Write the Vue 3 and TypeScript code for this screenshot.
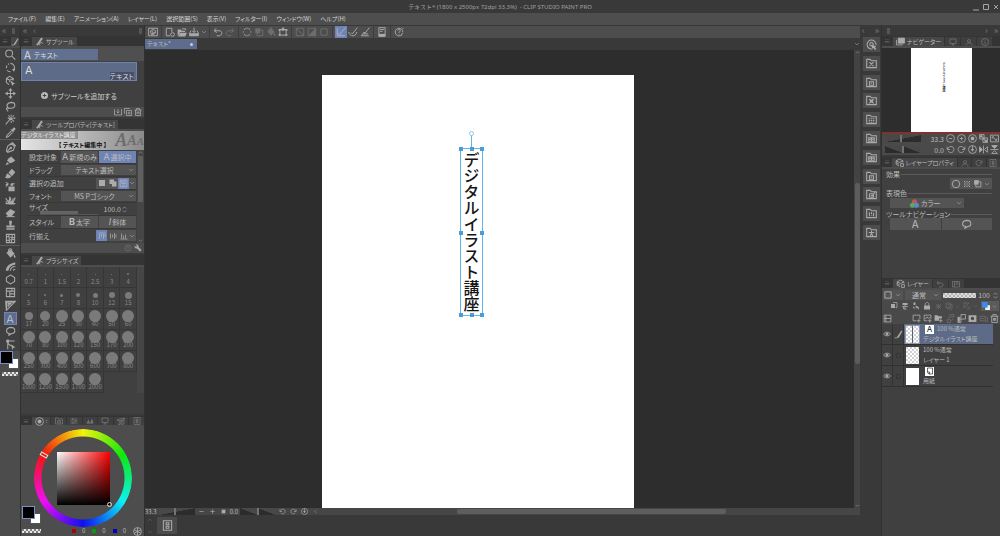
<script setup lang="ts">
import { h, ref } from 'vue'

type Shape = [d: string, filled?: boolean]

const icons: Record<string, Shape[]> = {
  zoom: [['M11 6.5a5 5 0 1 1-10 0a5 5 0 0 1 10 0M10 10.500l5 5']],
  rotate: [['M8 2a6 6 0 0 1 5 9M8 14a6 6 0 0 1-5-2M2 9a6 6 0 0 1 1-4M4.500 3.500l1.500-1'], ['M10 10h5l-2 4z', true]],
  object: [['M2 5l5-3l5 3v3M2 5v6l4 3M2 5l5 2.500l5-2.500M7 7.500v3'], ['M8 8l7 5l-3 .5l-1.500 2.500z', true]],
  move: [['M8 2v12M2 8h12'], ['M8 0l3 4h-6zM8 16l3-4h-6zM0 8l4-3v6zM16 8l-4-3v6z', true]],
  lasso: [['M6 11c-5-2-4-8 3-9c7 0 7 8 0 8.500c-3 .5-6-2-7 1c0 2 3 1 2 4']],
  wand: [['M7 8l-6 7M9 1v3M9 10v3M4 6h2M12 6h3M5 2l2 2M13 2l-2 2M13 11l-2-2'], ['M6 5h5v4h-5z', true]],
  dropper: [['M9 6L3 12l-1 3l3-1l6-6'], ['M8 4l1-1l1 1l2-3c2-1 4 1 3 3l-3 2l1 1l-1 1z', true]],
  pen: [['M9 2l5 5l-2 5l-8 3l-2-2l2-7zM3 14l5-5'], ['M9 1l2-1l5 5l-1 2zM7 7h3v3h-3z', true]],
  pencil: [['M1 15l2-5l3 3zM9 2l6 6l-4 3l-4 1l-4-4l2-3z', true], ['M9 5l3 3']],
  brush: [['M4 8c-3 1-2 5-4 6c4 2 8 1 9-2zM5 7l5 5l5-6l-5-5z', true], ['M10 4l2 2']],
  airbrush: [['M5 8h9v7h-9zM8 4h4v3h-4z', true], ['M1 2l4 2M1 5h4M1 8l3-2M9 4h5']],
  deco: [['M1 6l5 8l1-10l3 10l2-8M3 14l-2-3M15 5l-4 9M1 14h14'], ['M4 9l3 6h6l-2-5l-2 2l-2-3z', true]],
  eraser: [['M8 3l7 4l-6 7h-4l-4-5z', true], ['M2 14h12']],
  stamp: [['M6 1h4v3l-1 4h5v3h-12v-3h5l-1-4zM2 12h12v2h-12z', true]],
  liquify: [['M2 2h12v12h-12zM2 6c4-3 8 3 12 0M2 10c4 3 8-3 12 0M6 2c-2 4 2 8 0 12M10 2c2 4-2 8 0 12']],
  fill: [['M2 7l6-5l6 6l-6 6zM13 9c2 2 3 4 2 5c-2 1-3-2-2-5z', true], ['M5 5c0-5 5-5 5-1']],
  gradient: [['M1 14c1-7 6-11 14-12v3c-6 1-9 4-10 9z', true], ['M8 14c0-4 3-6 7-6M12 14c0-1 1-2 3-2']],
  hexagon: [['M8 1.500l6 3.500v6l-6 3.500l-6-3.500v-6z']],
  frame: [['M2 2h12v12h-12zM2 6h12M7 6v8M7 10h7M10 2v4']],
  ruler: [['M1 2h14l-13 13zM4.500 5h4l-4 4z'], ['M1 2h14l-2 2h-10v9l-1.500 2z', true]],
  balloon: [['M7 11c-7-1-6-8 1-9c8 0 8 8 2 9l-5 3z']],
  correct: [['M2 3h12M4 1v14M4 5c2 4 4 5 7 5'], ['M2 1h4v4h-4zM9 8l6 4l-3 1l-1 3z', true]],
  spiral: [['M1 2h14v12h-14zM11 8c0 3-6 4-7 0c0-5 8-5 8 0c0 4-6 5-8 3M8 6c-2 0-2 4 1 3']],
  newdoc: [['M8 14h-6v-12h9v6M15 12a3 3 0 1 1-6 0a3 3 0 0 1 6 0']],
  folder: [['M1 4h5l2 2h5v2h-8l-3 6h-1zM5 9h11l-3 6h-11z', true], ['M8 3h6v2']],
  save: [['M8 1v7M5 6l3 3l3-3M3 6l-2 4v4h14v-4l-2-4'], ['M1 10h14v4h-14z', true]],
  down: [['M3 5.500l5 5l5-5']],
  undo: [['M5 2L2 6l4 3M2 6h8c6 0 5 8 0 8h-4']],
  redo: [['M11 2l3 4l-4 3M14 6h-8c-6 0-5 8 0 8h4']],
  dots: [['M8 1v2M8 13v2M1 8h2M13 8h2M3 3l1.500 1.500M11.500 11.500l1.500 1.500M3 13l1.500-1.500M11.500 4.500l1.500-1.500M5 2l1 1.500M11 2l-1 1.500M5 14l1-1.500M11 14l-1-1.500']],
  copy: [['M5 5h9v9h-9z'], ['M2 2h8v8h-8z', true]],
  transform: [['M3 4h10v9h-10zM8 0v4'], ['M1 3h3v3h-3zM12 3h3v3h-3zM1 11h3v3h-3zM12 11h3v3h-3zM6 2h4v4h-4z', true]],
  desel: [['M2 2h12v12h-12zM2 2l12 12']],
  invert: [['M2 2h12v12h-12z'], ['M14 2v12h-12z', true]],
  square: [['M3 3h10v10h-10z']],
  snap1: [['M2 2v12h12M3 9l3 3l9-11']],
  snap2: [['M1 8c2 8 12 8 13 0M5 9l2 2l8-10']],
  snap3: [['M2 14h12M2 14l5-6M6 8l2 2l7-9M5 11h8']],
  page: [['M3 1h10v14h-10z'], ['M3 11h10v4h-10z', true], ['M5 4h6M5 7h4']],
  help: [['M12 13c-5 3-10 0-10-5c0-8 12-8 12 0M6 6c0-3 5-3 4 0l-2 3v1M8 12v1M13 1l2 2M14 9l-3 5']],
  saveSub: [['M2 3h-1v11h14v-11h-1M8 2v8M5 7l3 3l3-3']],
  addSub: [['M5 5h10v10h-10zM2 11h-1v-10h10v1M10 7v6M7 10h6']],
  trash: [['M1 4h14M3 4v11h10v-11M5 4v-3h6v3M6 7v5M8 7v5M10 7v5']],
  plus: [['M8 0a8 8 0 1 1 0 16a8 8 0 0 1 0-16M7 4v3h-3v2h3v3h2v-3h3v-2h-3v-3z', true]],
  wrench: [['M12 15l-6-6c-4 1-6-3-5-6l3 3l2-2l-3-3c5-1 7 2 6 5l6 6z', true]],
  clock: [['M14 8a6 6 0 1 1-12 0a6 6 0 0 1 12 0M8 4v5M6 7l2 2l2-2']],
  solid: [['M2 2h12v12h-12z', true]],
  merge: [['M1 1h9v4h5v10h-9v-5h-5z', true], ['M6 5h4v5h-4z']],
  subtract: [['M2 2h12v12h-12zM5 5h6v3h-6zM5 11h6M2 2l3 3']],
  alignTop: [['M1 2h14M3 4v10M7 4v6M11 4v10M14 4v6']],
  alignMid: [['M3 3v10M7 5v6M11 2v12M14 5v6']],
  alignBot: [['M1 14h14M3 3v10M7 7v6M11 5v8']],
  ring: [['M14 8a6 6 0 1 1-12 0a6 6 0 0 1 12 0']],
  tone: [['M2 2h2v2h-2zM7 2h2v2h-2zM12 2h2v2h-2zM4.500 4.500h2v2h-2zM9.500 4.500h2v2h-2zM2 7h2v2h-2zM7 7h2v2h-2zM12 7h2v2h-2zM4.500 9.500h2v2h-2zM9.500 9.500h2v2h-2zM2 12h2v2h-2zM7 12h2v2h-2zM12 12h2v2h-2z', true]],
  minusC: [['M15 8a7 7 0 1 1-14 0a7 7 0 0 1 14 0M5 8h6']],
  plusC: [['M15 8a7 7 0 1 1-14 0a7 7 0 0 1 14 0M5 8h6M8 5v6']],
  stopC: [['M15 8a7 7 0 1 1-14 0a7 7 0 0 1 14 0'], ['M5 5h6v6h-6z', true]],
  ccw: [['M4 11c2 4 10 3 10-3c0-7-9-7-11-1M2 3v5h5']],
  cw: [['M12 11c-2 4-10 3-10-3c0-7 9-7 11-1M14 3v5h-5']],
  resetC: [['M15 8a7 7 0 1 1-14 0a7 7 0 0 1 14 0M8 1v7'], ['M5 7h6l-3 5z', true]],
  fit: [['M1 1h8v8h-8zM7 7h8v8h-8zM4 4l7 7'], ['M2 2h4v4h-4zM10 10h4v4h-4z', true]],
  expand: [['M1 2h14v12h-14zM4 8v-3h3M12 8v3h-3M5 6l6 5']],
  flipH: [['M8 1v14M6 8l-5-5v10zM10 8l5-5v10z'], ['M6 8l-5-5v10z', true]],
  flipV: [['M1 8h14M8 6l-5-5h10zM8 10l-5 5h10z'], ['M8 6l-5-5h10z', true]],
  search: [['M9 14.500a6.500 6.500 0 1 1 5.500-5.500M10.500 7.500a2.500 2.500 0 1 1-5 0a2.500 2.500 0 0 1 5 0'], ['M8 8l7 3l-2 1l2 3l-2 1l-2-3l-2 1z', true]],
  fX: [['M1 14v-12h5l2 2h7v10zM5 6l6 6M11 6l-6 6']],
  fBox: [['M1 14v-12h5l2 2h7v10zM5 7h6v5h-6zM7 9h2']],
  fStar: [['M1 14v-12h5l2 2h7v10z'], ['M4 5l4 2l4-2l-2 4l2 4l-4-2l-4 2l2-4z', true]],
  fDots: [['M1 14v-12h5l2 2h7v10zM4 7h2M7 7h2M10 7h2M4 9.500h2M7 9.500h2M10 9.500h2M4 12h2M7 12h2M10 12h2']],
  fGrid: [['M1 14v-12h5l2 2h7v10zM4 7h8v5h-8zM8 7v5M4 9h8']],
  fCheck: [['M1 14v-12h5l2 2h7v10zM5 7h5M5 7v5h6v-3M7 9l2 1l4-5']],
  fList: [['M1 14v-12h5l2 2h7v10zM5 6v6M8 6v3M11 7v5M8 11h1']],
  fMan: [['M1 14v-12h5l2 2h7v10zM4 8h8M8 5v4l-2 4M8 9l2 4']],
  layers: [['M2 5l6-3l6 3l-6 3zM2 5v6l5 3M14 5v3M2 8l5 3M10 10h5v5h-5z']],
  image: [['M4 2h11v9h-11zM1 5v9h11'], ['M4 2h11v9h-11z', true]],
  monitor: [['M2 2h12v9h-12zM5 14h6M8 11v3']],
  person: [['M11 6a3 3 0 1 1-6 0a3 3 0 0 1 6 0M2 15c0-7 12-7 12 0']],
  info: [['M15 8a7 7 0 1 1-14 0a7 7 0 0 1 14 0M8 7v5M8 4v1']],
  film: [['M1 3h14v11h-14zM5 3v11M5 8h10M8 5h4']],
  rows: [['M2 2h12v12h-12zM2 8h12M5 2v12']],
  clip: [['M2 4h8v8h-8z', true], ['M6 1h8v10h-3']],
  light: [['M8 6v9M2 9h12M5 9v5h6'], ['M3 2h10v4h-10z', true]],
  draft: [['M7 9l6 2v4M3 9v3h4'], ['M8 7l6 4l-5 2zM3 1h4v5h-4z', true]],
  lock: [['M2 7h12v8h-12z', true], ['M4.500 7v-3c0-4 7-4 7 0v3']],
  ref: [['M2 2l12 12M14 2l-12 12M2 8h12M8 2v12']],
  mask: [['M2 2h9v9h-9zM11 5h3v9h-9v-3M5 5h3v3']],
  noruler: [['M2 2h10l-10 10zM8 9l6 6M14 9l-6 6']],
  newLayer: [['M8 12h-6v-10h12v7M12 9v6M9 12h6']],
  newTone: [['M8 12h-6v-10h12v7M12 9v6M9 12h6M4 9l3-4l2 3l3-2']],
  newFolder: [['M1 12v-10h5l2 2h6v4h-5v4z', true], ['M12 9v6M9 12h6']],
  transfer: [['M7 5h7v-4h-7zM2 10h6v5h-6zM5 8v-3M10 12l3-4']],
  mergeDown: [['M7 1h8v8h-8zM1 9h6v6h-6'], ['M1 5h4v9h-4z', true]],
  maskSolid: [['M1 2h14v12h-14zM11 8a3 3 0 1 0-6 0a3 3 0 0 0 6 0', true]],
  apply: [['M2 4h9v8h-9zM11 6h4v7h-4M4 8h5']],
  eye: [['M1 8c3-5 11-5 14 0c-3 5-11 5-14 0z'], ['M11 8a3 3 0 1 1-6 0a3 3 0 0 1 6 0', true]],
  stroke: [['M1 14h5'], ['M5 13l8-12l2 1l-7 12z', true]],
  tip: [['M9 15a3 3 0 1 1 5-3'], ['M2 14l9-13l3 2l-9 12z', true]],
  wheel: [['M15 8a7 7 0 1 1-14 0a7 7 0 0 1 14 0'], ['M11.500 8a3.500 3.500 0 1 1-7 0a3.500 3.500 0 0 1 7 0', true]],
  sliders: [['M1 4h14M1 8h14M1 12h14M5 2v4M11 6v4M6 10v4']],
  peaks: [['M1 13l4-8l3 8l4-10l3 10z', true]],
  fan: [['M1 5l14-3v3l-14 3zM3 15l4-8l2 1l-3 7zM9 15l2-8h3v7z']],
  globe: [['M15 8a7 7 0 1 1-14 0a7 7 0 0 1 14 0M8 1v14M2 5l12 6M14 5l-12 6']],
  minus: [['M3 8h10']],
  add: [['M3 8h10M8 3v10']],
  spin: [['M4 6l4-4l4 4M4 10l4 4l4-4']],
  tab: [['M2 1h12v14h-12zM6 4h4v3h-4zM6 9h4v3h-4z']],
  sheet: [['M3 2h10v12h-7l-3-3zM3 10h4v4']],
}

const Ic = (p: { n: string; s?: number }) =>
  h(
    'svg',
    { viewBox: '0 0 16 16', width: p.s ?? 9, height: p.s ?? 9, 'aria-hidden': 'true' },
    icons[p.n].map(([d, f]) =>
      h('path', {
        d,
        fill: f ? 'currentColor' : 'none',
        'fill-rule': 'evenodd',
        stroke: f ? 'none' : 'currentColor',
        'stroke-width': 1.5,
      }),
    ),
  )

const menus = ['ファイル(F)', '編集(E)', 'アニメーション(A)', 'レイヤー(L)', '選択範囲(S)', '表示(V)', 'フィルター(I)', 'ウィンドウ(W)', 'ヘルプ(H)']

const toolGroups = [
  ['zoom', 'rotate', 'object', 'move', 'lasso', 'wand', 'dropper'],
  ['pen', 'pencil', 'brush', 'airbrush', 'deco', 'eraser', 'stamp', 'liquify'],
  ['fill', 'gradient', 'hexagon', 'frame', 'ruler', 'text', 'balloon', 'correct'],
]
const tool = ref('text')

const commands: { items: string[]; dim?: boolean }[] = [
  { items: ['spiral'] },
  { items: ['newdoc', 'folder', 'save', 'down'] },
  { items: ['undo', 'redo'] },
  { items: ['dots', 'copy', 'fill', 'transform'] },
  { items: ['desel', 'invert', 'square'], dim: true },
  { items: ['snap1', 'snap2', 'snap3'] },
  { items: ['page'] },
  { items: ['help'] },
]
const dimmed = new Set(['redo', 'copy', 'fill'])

const brushes: [string, number][] = [
  ['0.7', 1], ['1', 1], ['1.5', 1], ['2', 1], ['2.5', 1], ['3', 1], ['4', 2],
  ['5', 2], ['6', 2], ['7', 3], ['8', 4], ['10', 5], ['12', 6], ['15', 7],
  ['17', 8], ['20', 10], ['25', 12], ['30', 12], ['40', 12], ['50', 12], ['60', 12],
  ['70', 12], ['80', 12], ['100', 12], ['120', 12], ['150', 12], ['170', 12], ['200', 12],
  ['250', 12], ['300', 12], ['400', 12], ['500', 12], ['600', 12], ['700', 12], ['800', 12],
  ['1000', 12], ['1200', 12], ['1500', 12], ['1700', 12], ['2000', 12],
]

const materials = ['search', 'fX', 'fBox', 'fStar', 'fDots', 'fGrid', 'fGrid', 'fBox', 'fCheck', 'fList', 'fMan']
const handles = ['nw', 'n', 'ne', 'w', 'e', 'sw', 's', 'se']
const rgb = ['#b00000', '#00a000', '#0000c8']

const layers = [
  { name: 'デジタルイラスト講座', mode: '100 %通常', badge: 'A', thumb: 'split' },
  { name: 'レイヤー 1', mode: '100 %通常', badge: '', thumb: 'check' },
  { name: '用紙', mode: '', badge: 'paper', thumb: 'white' },
]
const activeLayer = ref(0)
const size = ref('100.0')
</script>

<template>
  <div class="app">
    <header class="title">
      <h1>テキスト* (1800 x 2500px 72dpi 33.3%)&nbsp; - CLIP STUDIO PAINT PRO</h1>
      <div class="win">
        <button aria-label="最小化"><svg viewBox="0 0 8 8" width="8" height="8"><path d="M1 7h6" /></svg></button>
        <button aria-label="最大化"><svg viewBox="0 0 8 8" width="8" height="8"><path d="M1.500 1.500h5v5h-5z" /></svg></button>
        <button aria-label="閉じる"><svg viewBox="0 0 8 8" width="8" height="8"><path d="M2 2l4 4M6 2l-4 4" /></svg></button>
      </div>
    </header>
    <nav class="menu">
      <button v-for="m in menus" :key="m">{{ m }}</button>
    </nav>

    <div class="work">
      <aside class="tools">
        <div class="head"><span>«</span><i class="bar"></i></div>
        <div class="tabs"><span class="grip">≡</span><span class="tab only"><Ic n="stroke" :s="8" /></span></div>
        <div v-for="(g, i) in toolGroups" :key="i" class="group">
          <button v-for="t in g" :key="t" :class="{ on: tool === t }" :aria-label="t" @click="tool = t">
            <b v-if="t === 'text'">A</b>
            <Ic v-else :n="t" :s="11" />
          </button>
        </div>
        <div class="swatches">
          <span class="chips"><i class="fg"></i><i class="bg"></i></span>
          <i class="checker"></i>
        </div>
      </aside>

      <aside class="left">
        <div class="head"><span>«</span><span>‹</span><i class="bar end"></i></div>

        <section>
          <div class="tabs"><span class="grip">≡</span><span class="tab"><Ic n="tip" />サブツール</span></div>
          <div class="subgroup"><button><b>A</b>テキスト</button></div>
          <div class="sublist">
            <button class="subitem"><b>A</b><span>テキスト</span></button>
            <button class="addsub"><Ic n="plus" :s="7" />サブツールを追加する</button>
          </div>
          <div class="foot">
            <button aria-label="登録"><Ic n="saveSub" :s="8" /></button>
            <button aria-label="複製"><Ic n="addSub" :s="8" /></button>
            <button aria-label="削除"><Ic n="trash" :s="8" /></button>
          </div>
        </section>

        <section>
          <div class="tabs"><span class="grip">≡</span><span class="tab"><Ic n="tip" />ツールプロパティ[テキスト]</span></div>
          <div class="preview">
            <span class="sample">デジタルイラスト講座</span>
            <span class="ghost"><i>A</i><i>A</i><i>A</i></span>
            <strong>【 テキスト編集中 】</strong>
          </div>
          <div class="scrolled">
            <div class="props">
              <div class="row">
                <span>設定対象</span>
                <div class="pair"><button><b>A</b>新規のみ</button><button class="hot"><b>A</b>選択中</button></div>
              </div>
              <div class="row">
                <label for="drag">ドラッグ</label>
                <div class="pick"><select id="drag"><option>テキスト選択</option></select><Ic n="down" :s="6" /></div>
              </div>
              <div class="row">
                <span>選択の追加</span>
                <div class="modes">
                  <button aria-label="新規選択"><Ic n="solid" :s="8" /></button>
                  <button aria-label="追加選択"><Ic n="merge" :s="8" /></button>
                  <button class="hot" aria-label="選択中を切り替え"><Ic n="subtract" :s="9" /></button>
                  <Ic n="down" :s="6" />
                </div>
              </div>
              <div class="row">
                <label for="font">フォント</label>
                <div class="pick"><select id="font"><option>MS Pゴシック</option></select><Ic n="down" :s="6" /></div>
              </div>
              <div class="row sizes">
                <label for="size">サイズ</label>
                <input class="meter" type="range" value="66" aria-label="サイズ調整" />
                <input id="size" v-model="size" class="num" /><Ic n="spin" :s="7" />
              </div>
              <div class="row">
                <span>スタイル</span>
                <div class="pair"><button><b class="bold">B</b>太字</button><button><b class="it">I</b>斜体</button></div>
              </div>
              <div class="row cut">
                <span>行揃え</span>
                <div class="modes">
                  <button class="hot" aria-label="上揃え"><Ic n="alignTop" :s="8" /></button>
                  <button aria-label="中央揃え"><Ic n="alignMid" :s="8" /></button>
                  <button aria-label="下揃え"><Ic n="alignBot" :s="8" /></button>
                  <Ic n="down" :s="6" />
                </div>
              </div>
            </div>
            <div class="vscroll"><Ic n="down" :s="5" class="up" /><i></i><Ic n="down" :s="5" /></div>
          </div>
          <div class="foot"><button class="dim" aria-label="初期設定"><Ic n="clock" :s="8" /></button><button aria-label="詳細"><Ic n="wrench" :s="8" /></button></div>
        </section>

        <section class="brushes">
          <div class="tabs"><span class="grip">≡</span><span class="tab"><Ic n="tip" />ブラシサイズ</span></div>
          <div class="brushgrid">
            <button v-for="[label, d] in brushes" :key="label">
              <span class="dot"><i :style="{ width: d + 'px', height: d + 'px' }"></i></span>{{ label }}
            </button>
          </div>
        </section>

        <section class="color">
          <div class="tabs">
            <span class="grip">≡</span><span class="tab"><Ic n="wheel" :s="9" />:</span>
            <span v-for="n in ['fBox', 'sliders', 'peaks', 'monitor', 'fan', 'tab']" :key="n" class="tab off"><Ic :n="n" :s="8" /></span>
          </div>
          <div class="pickerwrap">
            <div class="wheel"><div class="hue"></div><i class="huemark"></i><div class="sv"></div><i class="svmark"></i></div>
            <span class="chips"><i class="fg"></i><i class="bg"></i></span>
          </div>
          <div class="rgb">
            <i class="checker"></i>
            <span v-for="c in rgb" :key="c"><i class="led" :style="{ background: c }"></i>0</span>
            <button aria-label="色空間"><Ic n="globe" :s="9" /></button>
          </div>
        </section>
      </aside>

      <main class="center">
        <div class="cmds">
          <div v-for="(c, i) in commands" :key="i" class="cgroup">
            <button v-for="n in c.items" :key="n" :aria-label="n" :class="{ dim: c.dim || dimmed.has(n), hot: n === 'snap1', thin: n === 'down' }">
              <Ic :n="n" :s="n === 'down' ? 6 : 10" />
            </button>
          </div>
        </div>
        <div class="docs"><button>テキスト*<i></i></button><Ic n="down" :s="6" /></div>
        <div class="stage">
          <div class="view">
            <div class="paper">
              <div class="frame">
                デジタルイラスト講座
                <i class="stem"></i><i class="knob"></i>
                <i v-for="k in handles" :key="k" :class="['h', k]"></i>
              </div>
            </div>
          </div>
          <div class="vbar"><Ic n="down" :s="5" class="up" /><i></i><Ic n="down" :s="5" /></div>
        </div>
        <div class="status">
          <span>33.3</span>
          <input class="wedge" type="range" value="45" aria-label="拡大率" />
          <button aria-label="縮小"><Ic n="minus" :s="7" /></button>
          <button aria-label="拡大"><Ic n="add" :s="7" /></button>
          <button aria-label="全体表示"><Ic n="solid" :s="5" /></button>
          <span>0.0</span>
          <input class="wedge hill" type="range" value="50" aria-label="回転" />
          <button aria-label="左回転"><Ic n="ccw" :s="7" /></button>
          <button aria-label="右回転"><Ic n="cw" :s="7" /></button>
          <button aria-label="回転リセット"><Ic n="resetC" :s="7" /></button>
          <button aria-label="左へ" class="side"><Ic n="down" :s="5" /></button>
          <div class="hbar"><i></i></div>
        </div>
        <div class="timeline">
          <div class="chev"><Ic n="down" :s="6" class="up" /><Ic n="down" :s="6" /></div>
          <button aria-label="タイムライン"><Ic n="tab" :s="11" /></button>
        </div>
      </main>

      <aside class="materials">
        <div class="head"><span>‹</span><span>»</span></div>
        <div class="mlist">
          <button v-for="(m, i) in materials" :key="i" aria-label="素材"><Ic :n="m" :s="11" /></button>
        </div>
      </aside>

      <aside class="right">
        <div class="head"><i class="bar"></i><span class="push">›</span><span>»</span></div>

        <section>
          <div class="tabs">
            <span class="grip">≡</span><span class="tab"><Ic n="image" />ナビゲーター</span>
            <span v-for="n in ['monitor', 'person', 'info']" :key="n" class="tab off"><Ic :n="n" :s="8" /></span>
          </div>
          <div class="navview"><div>デジタルイラスト講座</div></div>
          <div class="navctl">
            <input class="wedge" type="range" value="45" aria-label="ナビ拡大率" /><span>33.3</span>
            <button v-for="n in ['minusC', 'plusC', 'stopC', 'fit', 'expand']" :key="n" :aria-label="n"><Ic :n="n" :s="9" /></button>
          </div>
          <div class="navctl">
            <input class="wedge hill" type="range" value="49" aria-label="ナビ回転" /><span>0.0</span>
            <button v-for="n in ['ccw', 'cw', 'resetC', 'flipH', 'flipV']" :key="n" :aria-label="n"><Ic :n="n" :s="9" /></button>
          </div>
        </section>

        <section class="lprop">
          <div class="tabs">
            <span class="grip">≡</span><span class="tab"><Ic n="layers" />レイヤープロパティ</span>
            <span v-for="n in ['person', 'cw', 'tab']" :key="n" class="tab off"><Ic :n="n" :s="8" /></span>
          </div>
          <div class="lbody">
            <h2>効果</h2>
            <div class="fx">
              <button aria-label="境界効果"><Ic n="ring" :s="10" /></button>
              <button aria-label="トーン"><Ic n="tone" :s="8" /></button>
              <button aria-label="レイヤーカラー"><Ic n="copy" :s="9" /></button>
              <Ic n="down" :s="6" />
            </div>
            <h2>表現色</h2>
            <div class="pick colorpick">
              <svg class="tri" viewBox="0 0 16 16" width="9" height="9"><circle cx="8" cy="5" r="4.500" fill="#d65a4e" /><circle cx="4.500" cy="11" r="4.500" fill="#5cba5c" /><circle cx="11.500" cy="11" r="4.500" fill="#5b93e0" /></svg>
              <select aria-label="表現色"><option>カラー</option></select><Ic n="down" :s="6" />
            </div>
            <h2>ツールナビゲーション</h2>
            <div class="navtools"><button aria-label="テキスト"><b>A</b></button><button aria-label="フキダシ"><Ic n="balloon" :s="11" /></button></div>
          </div>
        </section>

        <section class="lay">
          <div class="tabs">
            <span class="grip">≡</span><span class="tab"><Ic n="layers" />レイヤー</span>
            <span v-for="n in ['undo', 'film']" :key="n" class="tab off"><Ic :n="n" :s="8" /></span>
          </div>
          <div class="lrow blend">
            <div class="boxed"><Ic n="square" :s="10" /><Ic n="down" :s="6" /></div>
            <div class="pick"><select aria-label="合成モード"><option>通常</option></select><Ic n="down" :s="6" /></div>
            <input class="opacity" type="range" value="100" aria-label="不透明度" />
            <span>100</span><Ic n="spin" :s="7" />
          </div>
          <div class="lrow locks">
            <button v-for="n in ['clip', 'light', 'draft', 'lock']" :key="n" :aria-label="n"><Ic :n="n" :s="8" /></button>
            <button class="dim" aria-label="参照"><Ic n="ref" :s="7" /></button>
            <button class="dim" aria-label="マスク"><Ic n="mask" :s="8" /><Ic n="down" :s="5" /></button>
            <button class="dim" aria-label="定規"><Ic n="noruler" :s="8" /><Ic n="down" :s="5" /></button>
            <button class="lcolor" aria-label="レイヤーカラー変更"><svg viewBox="0 0 10 10" width="8" height="8"><path d="M4 4h6v6h-6z" fill="#eee" /><path d="M0 0h7v7h-7z" fill="#3f8ae8" /></svg><Ic n="down" :s="5" /></button>
          </div>
          <div class="lrow acts">
            <button aria-label="2ペイン" class="first"><Ic n="rows" :s="9" /></button>
            <button v-for="n in ['newLayer', 'newTone', 'newFolder', 'transfer', 'mergeDown', 'maskSolid', 'apply', 'trash']" :key="n" :class="{ dim: n === 'transfer' || n === 'apply' }" :aria-label="n"><Ic :n="n" :s="9" /></button>
          </div>
          <ul class="llist">
            <li v-for="(l, i) in layers" :key="l.name" :class="{ on: activeLayer === i }" @click="activeLayer = i">
              <span class="cell"><Ic n="eye" :s="8" /></span>
              <span class="cell"><Ic v-if="i === 0" n="stroke" :s="9" /><i v-else></i></span>
              <div class="linfo">
                <span :class="['thumb', l.thumb]"></span>
                <div>
                  <p><span v-if="l.badge === 'A'" class="badge">A</span><span v-if="l.badge === 'paper'" class="badge"><Ic n="sheet" :s="8" /></span>{{ l.mode }}</p>
                  <p>{{ l.name }}</p>
                </div>
              </div>
            </li>
          </ul>
        </section>
      </aside>
    </div>
  </div>
</template>

<style>
html,
body {
  background: #393939;
}
</style>

<style scoped>
.app {
  display: flex;
  flex-direction: column;
  min-height: 100vh;
  background: #393939;
  color: #bcbcbc;
  font: 7px/8px 'Noto Sans CJK JP', sans-serif;
  font-feature-settings: 'palt';
  white-space: nowrap;
  cursor: default;
}
.app * {
  box-sizing: border-box;
}
button,
select,
input {
  margin: 0;
  padding: 0;
  border: 0;
  border-radius: 0;
  background: none;
  color: inherit;
  font: inherit;
  font-feature-settings: inherit;
  appearance: none;
  outline: none;
}
button {
  display: flex;
  align-items: center;
  justify-content: center;
}
svg {
  display: block;
  flex: none;
  opacity: 0.85;
}
b {
  font: 10px/10px Inter, sans-serif;
}
p,
h1,
h2,
ul {
  margin: 0;
  padding: 0;
  font-size: inherit;
  font-weight: normal;
  list-style: none;
}
.up {
  transform: rotate(180deg);
}
.dim {
  opacity: 0.35;
}
.hot {
  background: #6e84b6;
}

/* window frame */
.title {
  display: grid;
  grid-template-columns: 1fr auto;
  align-items: center;
  height: 13px;
  color: #a0a0a0;
}
.title h1 {
  grid-area: 1 / 1 / 2 / 3;
  text-align: center;
  font: 6px/8px 'Noto Sans', 'Noto Sans CJK JP', sans-serif;
}
.win {
  grid-area: 1 / 2;
  display: flex;
  gap: 2px;
}
.win path {
  fill: none;
  stroke: #b8b8b8;
}
.menu {
  display: flex;
  gap: 9px;
  height: 12px;
  padding-left: 8px;
  background: #4e4e4e;
  font-size: 6px;
  color: #d6d6d6;
}
.work {
  display: flex;
  flex: 1;
}
.work > * {
  display: flex;
  flex-direction: column;
  flex: none;
}
.head {
  display: flex;
  align-items: center;
  gap: 6px;
  height: 11px;
  padding: 0 2px;
  color: #7c7c7c;
  font-size: 9px;
}
.bar {
  width: 3px;
  height: 6px;
  margin-left: 3px;
  background: #555;
}
.end,
.push {
  margin-left: auto;
}
.tabs {
  display: flex;
  align-items: stretch;
  gap: 1px;
  height: 12px;
  padding: 1px 0 0 2px;
  border-bottom: 2px solid #4d4d4d;
  background: #343434;
  font-size: 6px;
}
.grip {
  width: 8px;
  color: #777;
}
.tab {
  display: flex;
  align-items: center;
  gap: 2px;
  padding: 0 3px;
  background: #474747;
  color: #bdbdbd;
}
.tab.only {
  padding: 0;
}
.tab.off {
  flex: 0 1 15px;
  justify-content: center;
  overflow: hidden;
  background: #3f3f3f;
  color: #808080;
}

/* tool column */
.tools {
  width: 21px;
  border-right: 1px solid #303030;
  background: #404040;
}
.tools .head {
  gap: 3px;
  background: #393939;
}
.group {
  display: flex;
  flex-direction: column;
  align-items: center;
}
.group + .group {
  padding-top: 1px;
  border-top: 1px solid #5c5c5c;
}
.group button {
  width: 13px;
  height: 13px;
}
.group .on {
  background: #5c6c92;
  outline: 1px solid #7385ad;
  outline-offset: -1px;
}
.group b {
  font-size: 11px;
}
.swatches {
  flex: 1;
  background: #4c4c4c;
}
.chips {
  display: block;
  position: relative;
  width: 19px;
  height: 18px;
}
.chips i {
  position: absolute;
}
.chips .fg {
  left: 0;
  top: 0;
  z-index: 1;
  width: 13px;
  height: 13px;
  border: 1px solid #7b90c8;
  background: #000;
}
.chips .bg {
  right: 0;
  bottom: 0;
  width: 11px;
  height: 11px;
  border: 1px solid #555;
  background: #fff;
}
.checker {
  display: block;
  width: 16px;
  height: 4px;
  background: repeating-conic-gradient(#e8e8e8 0 25%, #808080 0 50%) 0 0 / 4px 4px;
}
.swatches .checker {
  margin: 3px 2px;
}

/* left palettes */
.left {
  width: 124px;
  border-right: 1px solid #303030;
}
.left section {
  margin-bottom: 2px;
  background: #404040;
}
.subgroup {
  height: 13px;
  padding-top: 1px;
  background: #4f4f4f;
}
.subgroup button {
  justify-content: flex-start;
  gap: 3px;
  width: 77px;
  height: 11px;
  padding-left: 3px;
  background: #62708f;
  color: #ddd;
}
.sublist {
  height: 46px;
  padding: 1px 7px 0 0;
}
.subitem {
  justify-content: space-between;
  width: 100%;
  height: 19px;
  padding: 0 2px 0 3px;
  border: 1px solid #6f81a8;
  background: #5d6a88;
  color: #ddd;
}
.subitem b {
  align-self: flex-start;
  padding-top: 2px;
  font-size: 11px;
}
.subitem span {
  align-self: flex-end;
  background: #46506a;
}
.addsub {
  gap: 3px;
  width: 100%;
  height: 26px;
  padding-top: 3px;
  color: #d0d0d0;
}
.foot {
  display: flex;
  align-items: center;
  justify-content: flex-end;
  gap: 2px;
  height: 10px;
  padding-right: 2px;
  background: #4d4d4d;
}
.preview {
  display: grid;
  grid-template: 10px 9px / 1fr;
  height: 19px;
  background: linear-gradient(90deg, #e4e4e4, #8b8b8b);
}
.sample {
  grid-area: 1 / 1;
  justify-self: start;
  height: 8px;
  padding-right: 2px;
  background: #8e8e8e;
  color: #e6e6e6;
  font-size: 6px;
}
.ghost {
  grid-area: 1 / 1 / 3 / 2;
  display: flex;
  align-items: center;
  justify-self: end;
  color: #6d6d6d;
}
.ghost i {
  font: italic bold 14px/16px 'Liberation Serif', serif;
}
.ghost i:first-child {
  font-size: 18px;
  line-height: 19px;
}
.ghost i:last-child {
  font-size: 11px;
}
.preview strong {
  grid-area: 2 / 1;
  justify-self: center;
  color: #111;
  font-size: 6px;
}
.scrolled {
  display: flex;
  height: 93px;
}
.props {
  flex: 1;
  padding: 1px 1px 0 6px;
  overflow: hidden;
}
.row {
  display: grid;
  grid-template-columns: 32px 1fr;
  align-items: center;
  height: 13px;
  padding-left: 2px;
  border-bottom: 1px solid #383838;
}
.pair {
  display: grid;
  grid-template-columns: 1fr 1fr;
  gap: 1px;
  height: 12px;
}
.pair button {
  gap: 1px;
  background: #545454;
}
.pair b {
  font-size: 9px;
}
.pair .bold {
  font-weight: 700;
}
.pair .hot {
  background: #6e84b6;
}
.it {
  font-style: italic;
}
.pick {
  display: flex;
  align-items: center;
  height: 10px;
  padding-right: 2px;
  background: #545454;
}
.pick select {
  flex: 1;
  min-width: 0;
  height: 10px;
  text-align: center;
  text-align-last: center;
}
.modes {
  display: flex;
  justify-content: flex-end;
  align-items: center;
  justify-self: end;
  height: 11px;
  padding-right: 1px;
  background: #545454;
}
.modes button {
  width: 11px;
  height: 11px;
}
.sizes {
  grid-template-columns: 11px 58px 1fr 7px;
  grid-template-rows: 8px 4px;
  align-content: start;
  padding-right: 8px;
}
.sizes label {
  grid-area: 1 / 1;
}
.meter {
  grid-area: 2 / 2;
  width: 58px;
  height: 4px;
  background: linear-gradient(90deg, #646464 66%, transparent 0);
  border-bottom: 1px solid #555;
}
.meter::-webkit-slider-thumb,
.opacity::-webkit-slider-thumb {
  appearance: none;
  width: 1px;
  height: 4px;
}
.num {
  grid-area: 1 / 3 / 3 / 4;
  width: 100%;
  text-align: right;
}
.sizes svg {
  grid-area: 1 / 4 / 3 / 5;
}
.cut {
  border: 0;
}
.vscroll {
  display: flex;
  flex-direction: column;
  align-items: center;
  gap: 1px;
  width: 7px;
  background: #464646;
}
.vscroll i {
  flex: 0 1 46px;
  width: 5px;
  margin-bottom: auto;
  background: #5f5f5f;
}
.brushes {
  flex: 1 0 auto;
}
.brushgrid {
  display: grid;
  grid-template-columns: repeat(7, 1fr);
  padding-right: 7px;
  background: linear-gradient(90deg, #404040 116px, #464646 0);
}
.brushgrid button {
  flex-direction: column;
  justify-content: flex-start;
  height: 21px;
  border-right: 1px solid #363636;
  border-bottom: 1px solid #363636;
  color: #8a8a8a;
  font-size: 6px;
  line-height: 6px;
}
.dot {
  display: flex;
  flex: none;
  align-items: center;
  height: 14px;
  margin-bottom: -2px;
}
.dot i {
  border-radius: 50%;
  background: #7a7a7a;
}
.left .color {
  margin: 0;
  background: #4d4d4d;
}
.color .tabs {
  height: 11px;
}
.pickerwrap {
  display: grid;
  padding-top: 2px;
}
.wheel {
  grid-area: 1 / 1;
  position: relative;
  justify-self: center;
  width: 98px;
  height: 98px;
}
.hue {
  position: absolute;
  inset: 0;
  border-radius: 50%;
  background: conic-gradient(#f2f20d, #0de80d, #0df2f2, #1010f0, #f20df2, #f2140d, #f2f20d);
  mask: radial-gradient(circle, transparent 41px, #000 42px);
}
.huemark,
.svmark {
  position: absolute;
  border: 1px solid #ddd;
}
.huemark {
  left: 6px;
  top: 24px;
  width: 8px;
  height: 4px;
  transform: rotate(30deg);
}
.sv {
  position: absolute;
  inset: 23px 22px 22px 23px;
  background: linear-gradient(0deg, #000, transparent), linear-gradient(90deg, #fff, #f00);
}
.svmark {
  right: 20px;
  bottom: 20px;
  width: 5px;
  height: 5px;
  border-radius: 50%;
}
.pickerwrap .chips {
  grid-area: 1 / 1;
  align-self: end;
  margin: 0 0 3px 1px;
}
.rgb {
  display: flex;
  align-items: center;
  gap: 7px;
  height: 9px;
  padding: 0 2px 1px 1px;
}
.rgb .checker {
  width: 19px;
  margin-right: auto;
}
.rgb span {
  display: flex;
  align-items: center;
  gap: 6px;
  font-size: 6px;
}
.led {
  width: 4px;
  height: 4px;
}

/* document area */
.work .center {
  flex: 1;
  min-width: 0;
}
.cmds {
  display: flex;
  height: 13px;
  border-top: 1px solid #383838;
  background: #4d4d4d;
}
.cgroup {
  display: flex;
  padding: 0 2px;
}
.cgroup + .cgroup {
  border-left: 1px solid #3d3d3d;
}
.cgroup button {
  width: 12px;
}
.cgroup .thin {
  width: 7px;
}
.docs {
  display: flex;
  align-items: center;
  justify-content: space-between;
  height: 12px;
}
.docs button {
  justify-content: space-between;
  width: 52px;
  height: 10px;
  padding: 0 4px 0 2px;
  background: #5e6c8e;
  font-size: 6px;
}
.docs i {
  width: 3px;
  height: 3px;
  border-radius: 50%;
  background: #ccc;
}
.stage {
  display: flex;
  flex: 1;
  background: #2d2d2d;
}
.view {
  flex: 1;
  display: flex;
  padding-top: 25px;
}
.paper {
  position: relative;
  width: 44%;
  margin-left: 25%;
  background: #fff;
}
.frame {
  position: absolute;
  left: 44%;
  top: 73px;
  height: 168px;
  width: 23px;
  padding: 3px 0;
  border: 1px solid #5fb4ea;
  color: #151515;
  font: 500 16px/21px 'Noto Sans CJK JP', sans-serif;
  font-feature-settings: normal;
  writing-mode: vertical-rl;
}
.stem,
.knob,
.h {
  position: absolute;
}
.stem {
  left: 10px;
  top: -14px;
  width: 1px;
  height: 14px;
  background: #5fb4ea;
}
.knob {
  left: 8px;
  top: -18px;
  width: 5px;
  height: 5px;
  border: 1px solid #8cc6ec;
  border-radius: 50%;
  background: #fff;
}
.h {
  left: -2px;
  top: -2px;
  width: 4px;
  height: 4px;
  background: #4a9bd6;
}
.n,
.s {
  left: 9px;
}
.ne,
.e,
.se {
  left: auto;
  right: -2px;
}
.w,
.e {
  top: 82px;
}
.sw,
.s,
.se {
  top: auto;
  bottom: -2px;
}
.vbar {
  display: flex;
  flex-direction: column;
  align-items: center;
  width: 6px;
  background: #434343;
}
.vbar i {
  flex: 0 0 181px;
  width: 5px;
  margin: 128px 0 auto;
  border-radius: 2px;
  background: #5c5c5c;
}
.status {
  display: flex;
  align-items: center;
  gap: 2px;
  height: 7px;
  background: #464646;
  font-size: 6px;
  line-height: 7px;
}
.status button {
  width: 9px;
  height: 7px;
}
.status .side svg {
  transform: rotate(90deg);
}
.wedge {
  width: 36px;
  height: 7px;
  background: linear-gradient(to bottom right, #484848 50%, #2c2c2c 52%);
}
.wedge::-webkit-slider-thumb {
  appearance: none;
  width: 2px;
  height: 7px;
  background: #747474;
}
.hill {
  background:
    linear-gradient(to bottom left, #484848 50%, #2c2c2c 52%) 0 0 / 50% 100% no-repeat,
    linear-gradient(to bottom left, #484848 50%, #2c2c2c 52%) 100% 0 / 50% 100% no-repeat;
}
.hbar {
  flex: 1;
  height: 5px;
}
.hbar i {
  display: block;
  width: 50%;
  height: 5px;
  margin-left: 25%;
  border-radius: 2px;
  background: #5e5e5e;
}
.timeline {
  display: flex;
  align-items: center;
  gap: 4px;
  height: 21px;
  padding-left: 2px;
}
.chev {
  display: flex;
  flex-direction: column;
  gap: 6px;
  color: #707070;
}
.timeline button {
  width: 20px;
  height: 17px;
  background: #4b4b4b;
}

/* material column */
.materials {
  width: 22px;
  border-right: 1px solid #303030;
}
.materials .head {
  justify-content: space-between;
}
.mlist {
  display: flex;
  flex-direction: column;
  justify-content: space-between;
  height: 204px;
  padding: 1px 1px 0 3px;
}
.mlist button {
  height: 15px;
  background: #4d4d4d;
}

/* right palettes */
.right {
  width: 118px;
}
.right section {
  background: #404040;
}
.navview {
  display: flex;
  justify-content: center;
  height: 85px;
  border-bottom: 1px solid #b81818;
  background: #2d2d2d;
}
.navview div {
  display: flex;
  flex-direction: column;
  justify-content: center;
  width: 61px;
  padding: 14px 0 0 5px;
  background: #fff;
  color: #111;
  font: 500 3px/5px 'Noto Sans CJK JP', sans-serif;
  writing-mode: vertical-rl;
}
.navctl {
  display: flex;
  align-items: center;
  gap: 1px;
  height: 11px;
  padding: 0 1px 0 3px;
  background: #4a4a4a;
}
.navctl span {
  flex: 1;
  text-align: right;
}
.navctl button {
  width: 10px;
}
.lprop {
  margin-top: 2px;
}
.lbody {
  min-height: 109px;
  padding: 1px 8px 0 4px;
}
.lbody h2 {
  display: flex;
  align-items: center;
  gap: 1px;
  height: 8px;
}
.lbody h2::after {
  content: '';
  flex: 1;
  height: 1px;
  background: #5a5a5a;
}
.fx {
  display: flex;
  align-items: center;
  gap: 2px;
  width: 42px;
  height: 11px;
  margin: 0 0 0 auto;
  padding-left: 1px;
  background: #545454;
}
.colorpick {
  width: 74px;
  margin: 1px 0 2px 4px;
}
.tri {
  margin-left: 20px;
}
.colorpick select {
  text-align: left;
  text-align-last: left;
  padding-left: 2px;
}
.navtools {
  display: grid;
  grid-template-columns: 1fr 1fr;
  gap: 1px;
  padding-left: 4px;
}
.navtools button {
  height: 12px;
  background: #545454;
}
.lay {
  flex: 1;
}
.lrow {
  display: flex;
  align-items: center;
  height: 12px;
  padding: 0 1px;
  background: #494949;
}
.blend {
  gap: 2px;
  height: 10px;
}
.blend .pick {
  width: 36px;
}
.boxed {
  display: flex;
  align-items: center;
  gap: 2px;
  width: 20px;
  height: 10px;
  background: #545454;
}
.opacity {
  flex: 1;
  min-width: 0;
  height: 5px;
  background: repeating-conic-gradient(#e0e0e0 0 25%, #b0b0b0 0 50%) 0 0 / 4px 4px;
}
.locks {
  justify-content: space-between;
  padding-left: 8px;
}
.locks button {
  gap: 2px;
}
.lcolor {
  width: 18px;
  height: 10px;
  background: #5b5b5b;
}
.lcolor svg {
  opacity: 1;
}
.acts {
  justify-content: space-between;
}
.acts .first {
  margin-right: 18px;
}
.llist {
  margin-right: 7px;
}
.llist li {
  display: flex;
  height: 21px;
  border-bottom: 1px solid #303030;
}
.cell {
  display: flex;
  align-items: center;
  justify-content: center;
  width: 11px;
  border-right: 1px solid #333;
}
.cell i {
  width: 5px;
  height: 5px;
  border: 1px solid #353535;
}
.linfo {
  display: flex;
  flex: 1;
  align-items: center;
  gap: 4px;
  padding-left: 2px;
}
.on .linfo {
  background: #5d6a88;
}
.linfo p {
  display: flex;
  align-items: center;
  gap: 3px;
  height: 10px;
  font-size: 6px;
}
.thumb {
  width: 13px;
  height: 17px;
  background: #fff;
}
.thumb.check {
  background: repeating-conic-gradient(#fff 0 25%, #d2d2d2 0 50%) 0 0 / 4px 4px;
}
.thumb.split {
  background:
    linear-gradient(90deg, transparent 6px, #5a6170 6px 7px, transparent 7px),
    repeating-conic-gradient(#fff 0 25%, #d2d2d2 0 50%) 0 0 / 4px 4px;
  outline: 1px solid #8e98ae;
}
.badge {
  display: grid;
  place-items: center;
  width: 9px;
  height: 9px;
  margin-left: 2px;
  background: #fff;
  color: #111;
  font: 8px/8px Inter, sans-serif;
}
</style>
